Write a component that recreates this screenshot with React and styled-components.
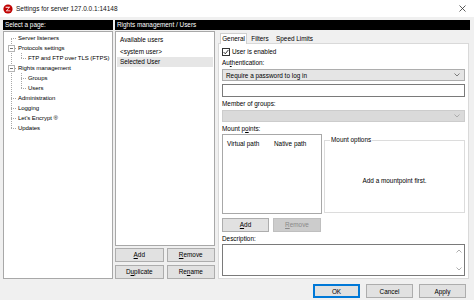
import React from 'react'
import styled, { createGlobalStyle } from 'styled-components'

const GlobalStyle = createGlobalStyle`
	html, body {
		margin: 0;
		padding: 0;
		background: #f0f0f0;
	}
	body {
		font-family: "Liberation Sans", Arial, sans-serif;
		font-size: 6.4px;
		color: #000;
	}
	* {
		box-sizing: border-box;
	}
`

const treeItems = [
	{ label: 'Server listeners' },
	{
		label: 'Protocols settings',
		children: ['FTP and FTP over TLS (FTPS)'],
	},
	{
		label: 'Rights management',
		children: ['Groups', 'Users'],
	},
	{ label: 'Administration' },
	{ label: 'Logging' },
	{ label: "Let's Encrypt \u00ae" },
	{ label: 'Updates' },
]

const Chevron = ({ up, color = '#606060' }) => (
	<svg width='6' height='4' viewBox='0 0 6 4'>
		<path
			d={up ? 'M0.5 3.5 L3 1 L5.5 3.5' : 'M0.5 0.5 L3 3 L5.5 0.5'}
			fill='none'
			stroke={color}
			strokeWidth='0.8'
		/>
	</svg>
)

const AppIcon = () => (
	<svg width='10' height='10' viewBox='0 0 10 10'>
		<circle cx='5' cy='5' r='4.6' fill='#bf0000' />
		<path d='M2.6 2.8 H7.3 L4.1 6.4 H7.4 V7.3 H2.6 L5.8 3.7 H2.6 Z' fill='#fff' />
	</svg>
)

const U = styled.span`
	text-decoration: underline;
`

const App = () => {
	return (
		<>
			<GlobalStyle />
			<Window>
				<TitleBar>
					<AppIcon />
					<Title>Settings for server 127.0.0.1:14148</Title>
					<Close>
						<svg width='7' height='7' viewBox='0 0 7 7'>
							<path d='M0.5 0.5 L6.5 6.5 M6.5 0.5 L0.5 6.5' stroke='#333' strokeWidth='0.8' />
						</svg>
					</Close>
				</TitleBar>

				<Body>
					<LeftColumn>
						<Header>Select a page:</Header>
						<TreeBox>
							<Tree $x={7} $top={5}>
								{treeItems.map((item) => (
									<li key={item.label}>
										<TreeRow $lvl={0}>
											{item.children && <Expander />}
											{item.label}
										</TreeRow>
										{item.children && (
											<Tree $x={17} $top={0}>
												{item.children.map((c) => (
													<li key={c}>
														<TreeRow $lvl={1}>{c}</TreeRow>
													</li>
												))}
											</Tree>
										)}
									</li>
								))}
							</Tree>
						</TreeBox>
					</LeftColumn>

					<RightColumn>
						<Header>Rights management / Users</Header>
						<Content>
							<UsersColumn>
								<UserList>
									<UserItem>Available users</UserItem>
									<UserItem $gap>&lt;system user&gt;</UserItem>
									<UserItem $selected>Selected User</UserItem>
								</UserList>
								<ButtonGrid>
									<Button><U>A</U>dd</Button>
									<Button><U>R</U>emove</Button>
									<Button>D<U>u</U>plicate</Button>
									<Button>Re<U>n</U>ame</Button>
								</ButtonGrid>
							</UsersColumn>

							<TabsColumn>
								<TabRow>
									<Tab $active $w={27}>General</Tab>
									<Tab $w={26}>Filters</Tab>
									<Tab $w={43}>Speed Limits</Tab>
								</TabRow>
								<Panel>
									<CheckRow>
										<CheckBox>
											<svg width='6' height='6' viewBox='0 0 6 6'>
												<path d='M0.6 3 L2.3 4.8 L5.4 0.9' fill='none' stroke='#222' strokeWidth='0.9' />
											</svg>
										</CheckBox>
										User is enabled
									</CheckRow>
									<FieldLabel>Au<U>t</U>hentication:</FieldLabel>
									<Select>
										Require a password to log in
										<Chevron />
									</Select>
									<TextField />
									<FieldLabel>Member of groups:</FieldLabel>
									<Select $disabled>
										<span />
										<Chevron color='#a0a0a0' />
									</Select>
									<FieldLabel>Mount p<U>o</U>ints:</FieldLabel>
									<MountRow>
										<MountList>
											<ColHead>Virtual path</ColHead>
											<ColHead>Native path</ColHead>
										</MountList>
										<GroupBox>
											<GroupLegend>Mount options</GroupLegend>
											Add a mountpoint first.
										</GroupBox>
									</MountRow>
									<MountButtons>
										<Button><U>A</U>dd</Button>
										<Button disabled><U>R</U>emove</Button>
									</MountButtons>
									<FieldLabel>Description:</FieldLabel>
									<TextArea>
										<ScrollBar>
											<Chevron up color='#9a9a9a' />
											<Chevron color='#9a9a9a' />
										</ScrollBar>
									</TextArea>
								</Panel>
							</TabsColumn>
						</Content>
					</RightColumn>
				</Body>

				<Footer>
					<FooterButton $default>OK</FooterButton>
					<FooterButton>Cancel</FooterButton>
					<FooterButton>Apply</FooterButton>
				</Footer>
			</Window>
		</>
	)
}

export default App

const Window = styled.div`
	width: 474px;
	height: 300px;
	display: flex;
	flex-direction: column;
	background: #f0f0f0;
	overflow: hidden;
`
const TitleBar = styled.div`
	height: 17px;
	flex-shrink: 0;
	display: flex;
	align-items: center;
	gap: 3px;
	padding: 0 8px 0 3px;
	background: #fff;
`
const Title = styled.div`
	flex: 1;
	font-size: 6.5px;
	color: #111;
`
const Close = styled.div`
	display: flex;
	align-items: center;
`
const Body = styled.div`
	height: 262px;
	flex-shrink: 0;
	display: flex;
	gap: 2px;
	padding: 3px 4px 0 3px;
`
const LeftColumn = styled.div`
	width: 110px;
	display: flex;
	flex-direction: column;
	gap: 1px;
`
const Header = styled.div`
	height: 10px;
	line-height: 10px;
	padding-left: 2px;
	background: #000;
	color: #fff;
	white-space: nowrap;
`
const TreeBox = styled.div`
	flex: 1;
	background: #fff;
	border: 1px solid #a8a8a8;
	padding-top: 1px;
	font-size: 6px;
`
const Tree = styled.ul`
	list-style: none;
	margin: 0;
	padding: 0;
	position: relative;

	&::before {
		content: '';
		position: absolute;
		left: ${({ $x }) => $x}px;
		top: ${({ $top }) => $top}px;
		bottom: 5px;
		border-left: 1px dotted #a8a8a8;
	}
`
const TreeRow = styled.div`
	position: relative;
	height: 10px;
	line-height: 10px;
	padding-left: ${({ $lvl }) => 14 + $lvl * 10}px;
	white-space: nowrap;
	letter-spacing: -0.05px;

	&::before {
		content: '';
		position: absolute;
		top: 5px;
		left: ${({ $lvl }) => 7 + $lvl * 10}px;
		width: 5px;
		border-top: 1px dotted #a8a8a8;
	}
`
const Expander = styled.span`
	position: absolute;
	z-index: 1;
	left: 4px;
	top: 2px;
	width: 7px;
	height: 7px;
	border: 1px solid #b4b4b4;
	background: #fff;

	&::after {
		content: '';
		position: absolute;
		left: 1px;
		top: 2px;
		width: 3px;
		border-top: 1px solid #707070;
	}
`
const RightColumn = styled.div`
	flex: 1;
	display: flex;
	flex-direction: column;
	gap: 1px;
`
const Content = styled.div`
	flex: 1;
	display: flex;
	gap: 3px;
`
const UsersColumn = styled.div`
	width: 100px;
	display: flex;
	flex-direction: column;
	gap: 2px;
`
const UserList = styled.div`
	flex: 1;
	background: #fff;
	border: 1px solid #a8a8a8;
	padding: 3px 1px 0 1px;
`
const UserItem = styled.div`
	height: 10px;
	line-height: 10px;
	padding-left: 3px;
	margin-top: ${({ $gap }) => ($gap ? '2px' : '0')};
	background: ${({ $selected }) => ($selected ? '#e6e6e6' : 'transparent')};
`
const ButtonGrid = styled.div`
	display: grid;
	grid-template-columns: 1fr 1fr;
	grid-auto-rows: 14px;
	gap: 3px;
`
const Button = styled.button`
	font: inherit;
	color: ${({ disabled }) => (disabled ? '#8a8a8a' : '#000')};
	background: ${({ disabled }) => (disabled ? '#cccccc' : '#e1e1e1')};
	border: 1px solid ${({ disabled }) => (disabled ? '#bfbfbf' : '#adadad')};
	border-radius: 0;
	padding: 0;
	height: 14px;
	line-height: 12px;
`
const TabsColumn = styled.div`
	flex: 1;
	display: flex;
	flex-direction: column;
	padding-top: 2px;
	padding-right: 1px;
`
const TabRow = styled.div`
	height: 10px;
	display: flex;
	padding-left: 2px;
	position: relative;
	z-index: 1;
`
const Tab = styled.div`
	width: ${({ $w }) => $w}px;
	height: ${({ $active }) => ($active ? '11px' : '10px')};
	line-height: 10px;
	text-align: center;
	white-space: nowrap;
	background: ${({ $active }) => ($active ? '#fff' : 'transparent')};
	border: 1px solid ${({ $active }) => ($active ? '#d0d0d0' : 'transparent')};
	border-bottom: none;
`
const Panel = styled.div`
	flex: 1;
	display: flex;
	flex-direction: column;
	background: #fff;
	border: 1px solid #d9d9d9;
	padding: 0 3px;
`
const CheckRow = styled.div`
	height: 9px;
	margin-top: 3px;
	display: flex;
	align-items: center;
	gap: 2px;
`
const CheckBox = styled.span`
	width: 8px;
	height: 8px;
	border: 1px solid #333;
	display: flex;
	align-items: center;
	justify-content: center;
`
const FieldLabel = styled.div`
	height: 10px;
	line-height: 10px;
	margin-top: 2px;
	white-space: nowrap;
`
const Select = styled.div`
	height: 12px;
	margin-top: 1px;
	display: flex;
	align-items: center;
	justify-content: space-between;
	padding: 0 4px 0 3px;
	background: ${({ $disabled }) => ($disabled ? '#dadada' : '#e5e5e5')};
	border: 1px solid ${({ $disabled }) => ($disabled ? '#cccccc' : '#adadad')};
`
const TextField = styled.div`
	height: 13px;
	margin-top: 3px;
	background: #fff;
	border: 1px solid #7a7a7a;
`
const MountRow = styled.div`
	height: 80px;
	display: flex;
	gap: 2px;
`
const MountList = styled.div`
	width: 100px;
	display: flex;
	align-items: flex-start;
	padding: 4px 0 0 4px;
	border: 1px solid #a8a8a8;
`
const ColHead = styled.div`
	width: 47px;
	line-height: 10px;
	white-space: nowrap;
`
const GroupBox = styled.div`
	flex: 1;
	position: relative;
	margin-top: 6px;
	margin-bottom: 1px;
	border: 1px solid #dcdcdc;
	display: flex;
	align-items: center;
	justify-content: center;
	padding-top: 8px;
	white-space: nowrap;
`
const GroupLegend = styled.span`
	position: absolute;
	left: 5px;
	top: -5px;
	padding: 0 1px;
	background: #fff;
	line-height: 8px;
`
const MountButtons = styled.div`
	display: grid;
	grid-template-columns: 47px 48px;
	gap: 4px;
	margin-top: 4px;
`
const TextArea = styled.div`
	height: 32px;
	background: #fff;
	border: 1px solid #7a7a7a;
	display: flex;
	justify-content: flex-end;
`
const ScrollBar = styled.div`
	width: 10px;
	display: flex;
	flex-direction: column;
	align-items: center;
	justify-content: space-between;
	padding: 4px 0;
`
const Footer = styled.div`
	flex: 1;
	display: flex;
	justify-content: flex-end;
	align-items: flex-start;
	gap: 6px;
	padding: 5px 8px 0 0;
`
const FooterButton = styled.button`
	font: inherit;
	width: 47px;
	height: 14px;
	padding: 0;
	border-radius: 0;
	background: #e1e1e1;
	border: 1px solid ${({ $default }) => ($default ? '#0078d7' : '#adadad')};
	box-shadow: ${({ $default }) => ($default ? 'inset 0 0 0 1px #0078d7' : 'none')};
	color: #000;
`
